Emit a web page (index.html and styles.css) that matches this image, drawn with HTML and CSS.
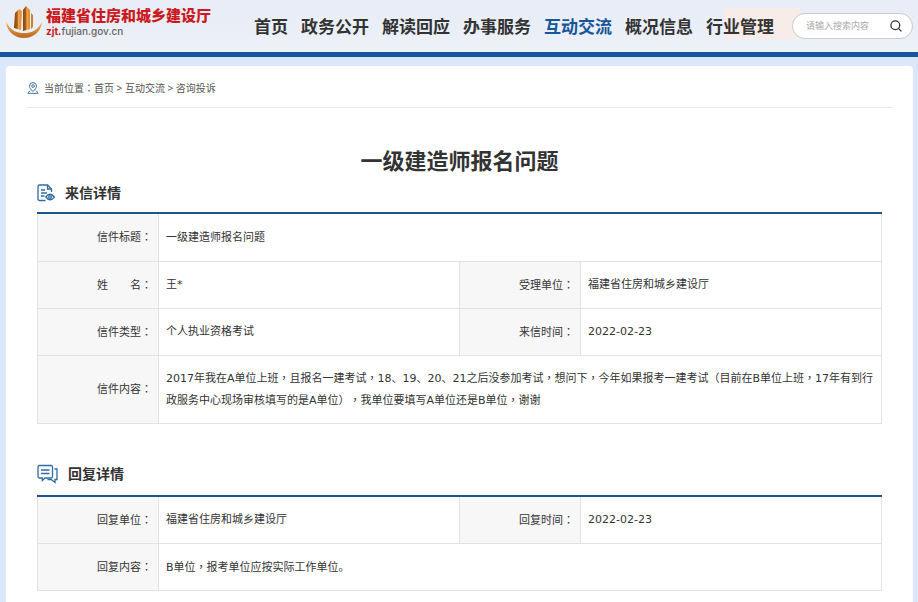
FILE: index.html
```html
<!DOCTYPE html>
<html lang="zh-CN">
<head>
<meta charset="utf-8">
<meta name="viewport" content="width=device-width, initial-scale=1">
<title>一级建造师报名问题</title>
<link rel="stylesheet" href="styles.css">
</head>
<body>
<header class="site-header">
  <a class="brand" href="#">
    <svg class="brand-mark" viewBox="0 0 36 33" aria-hidden="true">
      <defs>
        <linearGradient id="tower" x1="0" x2="1" y1="0" y2="0">
          <stop offset="0" stop-color="#8a4512"/>
          <stop offset=".4" stop-color="#a85c1a"/>
          <stop offset=".55" stop-color="#f0a548"/>
          <stop offset="1" stop-color="#d98a35"/>
        </linearGradient>
        <linearGradient id="bowl" x1="0" x2="0" y1="0" y2="1">
          <stop offset="0" stop-color="#f3b35b"/>
          <stop offset="1" stop-color="#b8651f"/>
        </linearGradient>
      </defs>
      <path fill="url(#tower)" d="M9 7L13 3L16 5L15 24L8 22z"/>
      <path fill="url(#tower)" d="M17 4L20 0L24 4V23L17 25z"/>
      <path fill="#cf7f2c" d="M25 7L27 9V21L25 23z"/>
      <path fill="url(#bowl)" d="M0 16C5 25 11 27 18 27S31 25 36 16C35 26 27 32 18 32S1 26 0 16z"/>
    </svg>
    <span class="brand-text">
      <span class="brand-name">福建省住房和城乡建设厅</span>
      <span class="brand-url"><b>zjt.</b>fujian.gov.cn</span>
    </span>
  </a>
  <nav class="main-nav">
    <a href="#">首页</a>
    <a href="#">政务公开</a>
    <a href="#">解读回应</a>
    <a href="#">办事服务</a>
    <a class="active" href="#">互动交流</a>
    <a href="#">概况信息</a>
    <a href="#">行业管理</a>
  </nav>
  <form class="search">
    <input type="text" placeholder="请输入搜索内容" aria-label="请输入搜索内容">
    <button type="submit" aria-label="搜索">
      <svg viewBox="0 0 12 12" aria-hidden="true"><circle cx="5.3" cy="5.3" r="4.4"/><path d="M8.6 8.6l2.8 2.8"/></svg>
    </button>
  </form>
</header>

<main class="panel">
  <nav class="breadcrumb">
    <svg viewBox="0 0 12 12" aria-hidden="true">
      <path d="M6 9.500C3.800 7.400 2.500 5.900 2.500 4.100a3.500 3.500 0 0 1 7 0C9.500 5.900 8.200 7.400 6 9.500z"/>
      <circle cx="6" cy="4.100" r="1.300"/>
      <path d="M3 8.500L.8 11.300h10.400L9 8.500"/>
    </svg>
    <span>当前位置<i lang="zh-Hant">：</i><a href="#">首页</a> &gt; <a href="#">互动交流</a> &gt; <a href="#">咨询投诉</a></span>
  </nav>

  <h1>一级建造师报名问题</h1>

  <section class="detail">
    <h2 class="letter-heading">
      <svg class="letter-icon" viewBox="0 0 18 18" aria-hidden="true">
        <path d="M8.500 16.500H2.500A1.500 1.500 0 0 1 1 15V2.500A1.500 1.500 0 0 1 2.500 1H10.500L14.500 5V8"/>
        <path d="M10.500 1V5H14.500M4 6H8M4 9H10M4 12H7.500"/>
        <path d="M8.800 13Q13 7.500 17.300 13Q13 18.500 8.800 13Z"/>
        <circle cx="13" cy="13" r="1.300"/>
      </svg>
      来信详情
    </h2>
    <table>
      <colgroup><col class="label-col"><col><col class="label-col"><col></colgroup>
      <tr><th scope="row">信件标题<i lang="zh-Hant">：</i></th><td colspan="3">一级建造师报名问题</td></tr>
      <tr><th scope="row">姓　　名<i lang="zh-Hant">：</i></th><td>王*</td><th scope="row">受理单位<i lang="zh-Hant">：</i></th><td>福建省住房和城乡建设厅</td></tr>
      <tr><th scope="row">信件类型<i lang="zh-Hant">：</i></th><td>个人执业资格考试</td><th scope="row">来信时间<i lang="zh-Hant">：</i></th><td>2022-02-23</td></tr>
      <tr><th scope="row">信件内容<i lang="zh-Hant">：</i></th><td class="message" colspan="3">2017年我在A单位上班<i lang="zh-Hant">，</i>且报名一建考试<i lang="zh-Hant">，</i>18、19、20、21之后没参加考试<i lang="zh-Hant">，</i>想问下<i lang="zh-Hant">，</i>今年如果报考一建考试（目前在B单位上班<i lang="zh-Hant">，</i>17年有到行<br>政服务中心现场审核填写的是A单位）<i lang="zh-Hant">，</i>我单位要填写A单位还是B单位<i lang="zh-Hant">，</i>谢谢</td></tr>
    </table>
  </section>

  <section class="detail">
    <h2 class="reply-heading">
      <svg class="reply-icon" viewBox="0 0 21 20" aria-hidden="true">
        <path d="M2.500 1.500H14A1.500 1.500 0 0 1 15.500 3V12.500A1.500 1.500 0 0 1 14 14H8L5.300 16.500V14H2.500A1.500 1.500 0 0 1 1 12.500V3A1.500 1.500 0 0 1 2.500 1.500Z"/>
        <path d="M4 6H12.500M4 9.500H12.500M17.500 5H20V15.500H18V18.500L14.500 15.700H10.500"/>
      </svg>
      回复详情
    </h2>
    <table>
      <colgroup><col class="label-col"><col><col class="label-col"><col></colgroup>
      <tr><th scope="row">回复单位<i lang="zh-Hant">：</i></th><td>福建省住房和城乡建设厅</td><th scope="row">回复时间<i lang="zh-Hant">：</i></th><td>2022-02-23</td></tr>
      <tr><th scope="row">回复内容<i lang="zh-Hant">：</i></th><td colspan="3">B单位<i lang="zh-Hant">，</i>报考单位应按实际工作单位。</td></tr>
    </table>
  </section>
</main>
</body>
</html>
```

FILE: styles.css
```css
* {
  box-sizing: border-box;
}

body {
  margin: 0;
  min-height: 100vh;
  display: flex;
  flex-direction: column;
  background: #dbe7fa;
  color: #333;
  font: 11px/21px "Noto Sans", "Noto Sans CJK SC", sans-serif;
  text-spacing-trim: space-all;
}

a {
  color: inherit;
  text-decoration: none;
}

svg {
  flex: none;
  fill: none;
}

/* Full-width marks centred in their cell */
i {
  font-family: "Noto Sans CJK TC", sans-serif;
  font-style: normal;
}

.site-header {
  display: flex;
  align-items: center;
  height: 57px;
  padding: 0 5px 0 6px;
  border-bottom: 5px solid #17569b;
  background:
    linear-gradient(#f8ece8, #f8ece8) right 118px top 8px / 76px 31px no-repeat,
    linear-gradient(#e7ecf6, #edf1f8);
}

.brand {
  display: flex;
  align-items: center;
  gap: 4px;
  margin-bottom: 8px;
}

.brand-mark {
  width: 36px;
  height: 33px;
}

.brand-text {
  display: flex;
  flex-direction: column;
}

.brand-name {
  color: #cc1a20;
  font-size: 15px;
  font-weight: 900;
  line-height: 18px;
  white-space: nowrap;
}

.brand-url {
  color: #666;
  font: 500 10px/14px Inter, sans-serif;
}

.brand-url b {
  color: #cc1a20;
}

.main-nav {
  display: flex;
  gap: 13px;
  margin-left: auto;
  padding-top: 2px;
  font-size: 17px;
  font-weight: 700;
  line-height: 24px;
  white-space: nowrap;
}

.main-nav .active {
  color: #17569b;
}

.search {
  display: flex;
  align-items: center;
  width: 121px;
  height: 26px;
  margin-left: 18px;
  padding: 0 10px 0 13px;
  border: 1px solid #ccc;
  border-radius: 13px;
  background: #fff;
}

.search input {
  flex: 1;
  min-width: 0;
  padding: 0;
  border: 0;
  outline: 0;
  background: none;
  font: 9px/20px "Noto Sans CJK SC", sans-serif;
}

.search input::placeholder {
  color: #aaa;
}

.search button {
  display: flex;
  padding: 0;
  border: 0;
  background: none;
}

.search svg {
  width: 12px;
  height: 12px;
  stroke: #333;
  stroke-width: 1.3;
}

.panel {
  flex: 1;
  margin: 9px 5px 0 6px;
  padding: 0 21px 8px;
  border-radius: 4px 4px 0 0;
  background: #fff;
}

.breadcrumb {
  display: flex;
  align-items: center;
  gap: 5px;
  height: 42px;
  padding-top: 3px;
  border-bottom: 1px solid #e8e8e8;
  color: #555;
  font-size: 10px;
}

.breadcrumb svg {
  width: 12px;
  height: 12px;
  stroke: #3a75a8;
}

h1 {
  margin: 35px 0 0;
  font-size: 22px;
  line-height: 34px;
  text-align: center;
}

.detail {
  margin: 0 10px;
}

.detail + .detail {
  margin-top: 31px;
}

h2 {
  display: flex;
  align-items: center;
  gap: 10px;
  margin: 0;
  font-size: 14px;
}

.letter-heading {
  height: 35px;
  padding-bottom: 4px;
}

.reply-heading {
  height: 40px;
  padding-bottom: 2px;
}

h2 svg {
  stroke: #2f6ca3;
  stroke-width: 1.3;
}

.letter-icon {
  width: 18px;
  height: 18px;
}

.reply-icon {
  width: 21px;
  height: 20px;
}

table {
  width: 100%;
  table-layout: fixed;
  border-collapse: collapse;
  font-family: "DejaVu Sans", "Noto Sans CJK SC", sans-serif;
}

.label-col {
  width: 121px;
}

th,
td {
  height: 47px;
  padding: 0 6px 0 7px;
  border: 1px solid #e2e2e2;
  text-align: left;
}

tr:first-child > * {
  height: 48px;
  border-top: 2px solid #1a5590;
}

th {
  background: #f7f7f7;
  font-weight: 400;
  text-align: right;
}

.message {
  height: 68px;
  padding-right: 0;
}
```
